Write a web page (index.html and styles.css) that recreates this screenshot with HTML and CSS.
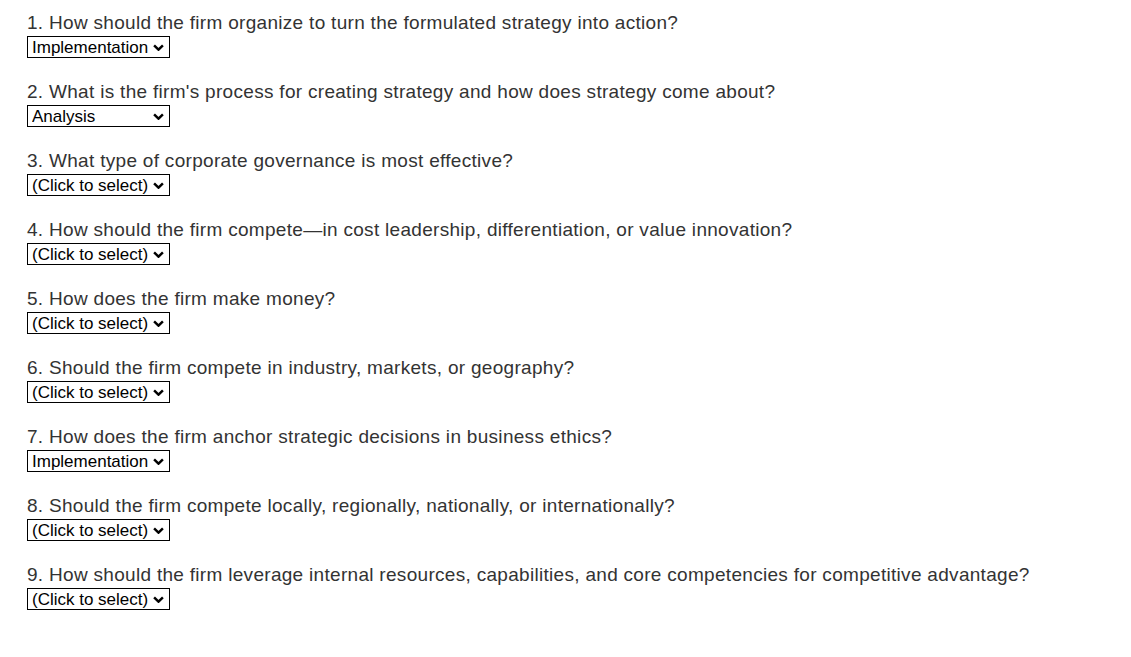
FILE: index.html
```html
<!DOCTYPE html>
<html lang="en">
<head>
  <meta charset="UTF-8">
  <title>Strategy questions</title>
  <link rel="stylesheet" href="styles.css">
</head>
<body>
  <div class="quiz">
    <div class="item">
      <div class="question">1. How should the firm organize to turn the formulated strategy into action?</div>
      <div class="select-wrap">
        <select class="answer">
          <option>(Click to select)</option>
          <option selected>Implementation</option>
          <option>Analysis</option>
          <option>Formulation</option>
        </select>
        <svg class="chevron" viewBox="0 0 10 6"><path d="M1 1l4 4 4-4"/></svg>
      </div>
    </div>
    <div class="item">
      <div class="question">2. What is the firm's process for creating strategy and how does strategy come about?</div>
      <div class="select-wrap">
        <select class="answer">
          <option>(Click to select)</option>
          <option>Implementation</option>
          <option selected>Analysis</option>
          <option>Formulation</option>
        </select>
        <svg class="chevron" viewBox="0 0 10 6"><path d="M1 1l4 4 4-4"/></svg>
      </div>
    </div>
    <div class="item">
      <div class="question">3. What type of corporate governance is most effective?</div>
      <div class="select-wrap">
        <select class="answer">
          <option selected>(Click to select)</option>
          <option>Implementation</option>
          <option>Analysis</option>
          <option>Formulation</option>
        </select>
        <svg class="chevron" viewBox="0 0 10 6"><path d="M1 1l4 4 4-4"/></svg>
      </div>
    </div>
    <div class="item">
      <div class="question">4. How should the firm compete—in cost leadership, differentiation, or value innovation?</div>
      <div class="select-wrap">
        <select class="answer">
          <option selected>(Click to select)</option>
          <option>Implementation</option>
          <option>Analysis</option>
          <option>Formulation</option>
        </select>
        <svg class="chevron" viewBox="0 0 10 6"><path d="M1 1l4 4 4-4"/></svg>
      </div>
    </div>
    <div class="item">
      <div class="question">5. How does the firm make money?</div>
      <div class="select-wrap">
        <select class="answer">
          <option selected>(Click to select)</option>
          <option>Implementation</option>
          <option>Analysis</option>
          <option>Formulation</option>
        </select>
        <svg class="chevron" viewBox="0 0 10 6"><path d="M1 1l4 4 4-4"/></svg>
      </div>
    </div>
    <div class="item">
      <div class="question">6. Should the firm compete in industry, markets, or geography?</div>
      <div class="select-wrap">
        <select class="answer">
          <option selected>(Click to select)</option>
          <option>Implementation</option>
          <option>Analysis</option>
          <option>Formulation</option>
        </select>
        <svg class="chevron" viewBox="0 0 10 6"><path d="M1 1l4 4 4-4"/></svg>
      </div>
    </div>
    <div class="item">
      <div class="question">7. How does the firm anchor strategic decisions in business ethics?</div>
      <div class="select-wrap">
        <select class="answer">
          <option>(Click to select)</option>
          <option selected>Implementation</option>
          <option>Analysis</option>
          <option>Formulation</option>
        </select>
        <svg class="chevron" viewBox="0 0 10 6"><path d="M1 1l4 4 4-4"/></svg>
      </div>
    </div>
    <div class="item">
      <div class="question">8. Should the firm compete locally, regionally, nationally, or internationally?</div>
      <div class="select-wrap">
        <select class="answer">
          <option selected>(Click to select)</option>
          <option>Implementation</option>
          <option>Analysis</option>
          <option>Formulation</option>
        </select>
        <svg class="chevron" viewBox="0 0 10 6"><path d="M1 1l4 4 4-4"/></svg>
      </div>
    </div>
    <div class="item">
      <div class="question">9. How should the firm leverage internal resources, capabilities, and core competencies for competitive advantage?</div>
      <div class="select-wrap">
        <select class="answer">
          <option selected>(Click to select)</option>
          <option>Implementation</option>
          <option>Analysis</option>
          <option>Formulation</option>
        </select>
        <svg class="chevron" viewBox="0 0 10 6"><path d="M1 1l4 4 4-4"/></svg>
      </div>
    </div>
  </div>
</body>
</html>
```

FILE: styles.css
```css
body {
  margin: 0;
  background: #fff;
  font-family: "Liberation Sans", Arial, sans-serif;
  color: #333;
}

.quiz {
  padding: 11px 0 0 27px;
}

.item {
  margin-bottom: 22px;
}

.question {
  font-size: 19px;
  line-height: 24px;
  letter-spacing: 0.3px;
}

.select-wrap {
  position: relative;
  width: 143px;
  margin-top: 1px;
}

.answer {
  display: block;
  width: 143px;
  height: 22px;
  margin: 0;
  padding: 0 0 0 4px;
  border: 1px solid #000;
  border-radius: 0;
  background: #fff;
  color: #000;
  font-family: "Liberation Sans", Arial, sans-serif;
  font-size: 17px;
  -webkit-appearance: none;
  appearance: none;
}

.chevron {
  position: absolute;
  right: 6px;
  top: 8px;
  width: 11px;
  height: 7px;
  fill: none;
  stroke: #000;
  stroke-width: 2.2;
  pointer-events: none;
}
```
